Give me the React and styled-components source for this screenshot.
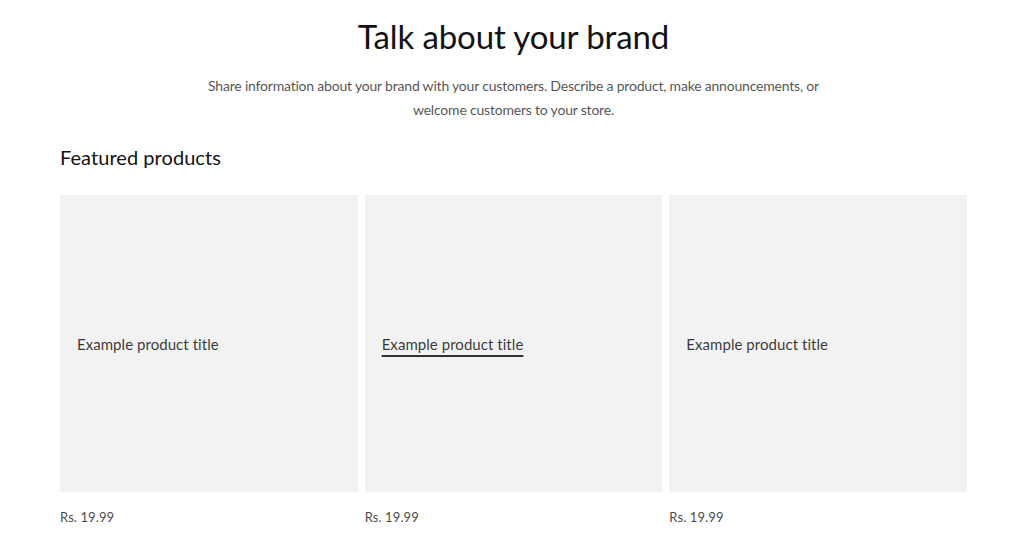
import React from "react";
import styled, { createGlobalStyle } from "styled-components";

const Global = createGlobalStyle`
  html, body { margin: 0; padding: 0; background: #fff; }
  body { font-family: Lato, "Noto Sans", sans-serif; color: rgb(18,18,18); }
  * { box-sizing: border-box; }
`;

const Page = styled.div`
  width: 1024px;
  padding: 0 57px 0 60px;
`;

const Intro = styled.section`
  display: flex;
  flex-direction: column;
  align-items: center;
  text-align: center;
  padding-top: 15px;
`;

const Heading = styled.h2`
  margin: 0;
  font-size: 33px;
  font-weight: 400;
  line-height: 42px;
  letter-spacing: -0.1px;
  color: rgb(18,18,18);
`;

const Lead = styled.p`
  margin: 17px 0 0;
  width: 625px;
  font-size: 14px;
  line-height: 24px;
  letter-spacing: -0.2px;
  color: rgba(18,18,18,0.75);
`;

const SectionTitle = styled.h3`
  margin: 20px 0 0;
  font-size: 20px;
  font-weight: 400;
  line-height: 30px;
  letter-spacing: 0.05px;
  color: rgb(18,18,18);
`;

const Grid = styled.div`
  display: grid;
  grid-template-columns: repeat(3, 1fr);
  gap: 7px;
  margin-top: 23px;
`;

const Card = styled.div`
  display: flex;
  flex-direction: column;
`;

const Media = styled.div`
  height: 297px;
  background: #f2f2f2;
  display: flex;
  align-items: center;
  padding: 0 16px 0 17px;
`;

const Title = styled.span`
  font-size: 15px;
  line-height: 20px;
  letter-spacing: 0.05px;
  color: rgba(18,18,18,0.85);
  text-decoration: ${(p) => (p.$hover ? "underline" : "none")};
  text-decoration-thickness: 2px;
  text-underline-offset: 5px;
`;

const Price = styled.div`
  margin-top: 17px;
  font-size: 13px;
  line-height: 16px;
  letter-spacing: 0.1px;
  color: rgba(18,18,18,0.8);
`;

export default function App() {
  return (
    <Page>
      <Global />
      <Intro>
        <Heading>Talk about your brand</Heading>
        <Lead>
          Share information about your brand with your customers. Describe a product, make announcements, or welcome customers to your store.
        </Lead>
      </Intro>
      <SectionTitle>Featured products</SectionTitle>
      <Grid>
        {[0, 1, 2].map((i) => (
          <Card key={i}>
            <Media>
              <Title $hover={i === 1}>Example product title</Title>
            </Media>
            <Price>Rs. 19.99</Price>
          </Card>
        ))}
      </Grid>
    </Page>
  );
}
